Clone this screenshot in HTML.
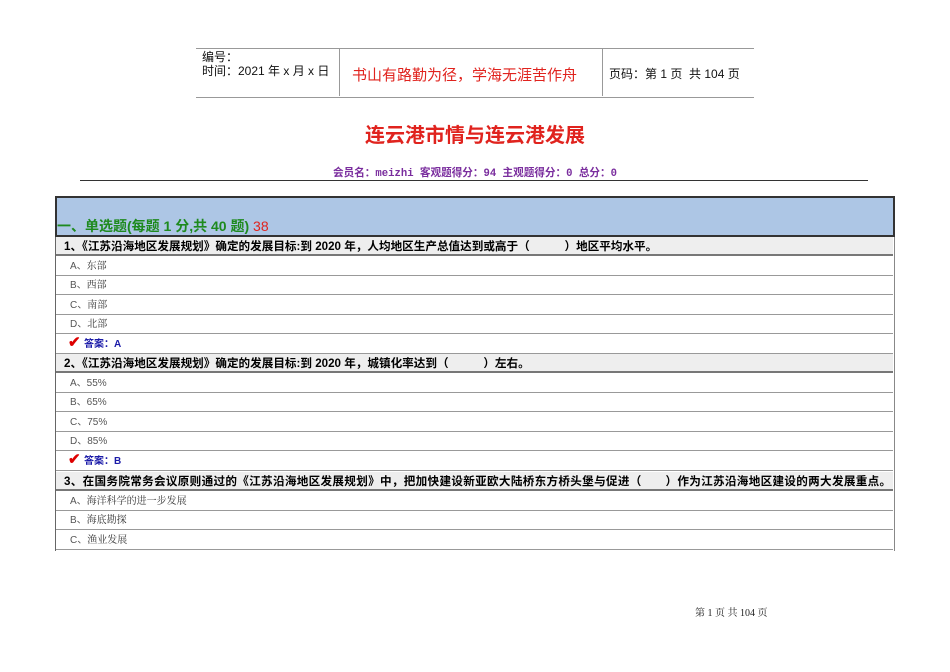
<!DOCTYPE html>
<html><head><meta charset="utf-8"><style>
body{margin:0;width:950px;height:672px;background:#fff;position:relative;font-family:"Liberation Sans","Noto Sans CJK SC",sans-serif;overflow:hidden}
.a{position:absolute;white-space:nowrap}
.row{position:absolute;left:56px;width:837px;height:19px;border-bottom:1.5px solid #999;font-size:10px;line-height:19px;box-sizing:border-box}
.q{background:#eee;font-weight:bold;color:#000;padding-left:8px;border-bottom:2px solid #777;font-size:11.6px}
.o{color:#555;padding-left:14px}
.o span{color:#333;font-family:"Liberation Serif","Noto Serif CJK SC",serif}
.ans{color:#1a1aa8;font-weight:bold;padding-left:28px;font-size:10px}
.ans:before{content:"✔";color:#d00;position:absolute;left:12px;top:-2px;font-size:15px}
</style></head><body>
<div class="a" style="left:196px;top:48px;width:558px;height:48px;border-top:1px solid #999;border-bottom:1px solid #999"></div>
<div class="a" style="left:339px;top:48px;width:262px;height:48px;border-left:1px solid #999;border-right:1px solid #999"></div>
<div class="a" style="left:202px;top:50px;font-size:12px;line-height:14px;color:#111">编号：<br>时间：2021 年 x 月 x 日</div>
<div class="a" style="left:352px;top:64px;font-size:15px;color:#e0231e">书山有路勤为径，学海无涯苦作舟</div>
<div class="a" style="left:609px;top:65px;font-size:12px;color:#111">页码：第 1 页 &nbsp;共 104 页</div>
<div class="a" style="left:0;width:950px;text-align:center;top:119px;font-size:20px;font-weight:bold;color:#e0231e">连云港市情与连云港发展</div>
<div class="a" style="left:0;width:950px;text-align:center;top:165px;font-size:10.6px;font-weight:bold;color:#7a2d9e;font-family:'Liberation Mono','Noto Sans CJK SC',monospace">会员名：meizhi 客观题得分：94 主观题得分：0 总分：0</div>
<div class="a" style="left:80px;top:180px;width:788px;border-top:1px solid #333"></div>
<div class="a" style="left:55px;top:196px;width:840px;height:355px;border-left:1.5px solid #666;border-right:1.5px solid #888;box-sizing:border-box"></div>
<div class="a" style="left:55px;top:196px;width:840px;height:41px;background:#adc6e5;border:2px solid #333;box-sizing:border-box"></div>
<div class="a" style="left:57px;top:216px;font-size:14px;font-weight:bold;color:#1e8a1e">一、单选题(每题 1 分,共 40 题) <span style="color:#e0231e;font-weight:normal">38</span></div>
<div class="row q" style="top:237px">1、《江苏沿海地区发展规划》确定的发展目标:到 2020 年，人均地区生产总值达到或高于（　　　）地区平均水平。</div>
<div class="row o" style="top:257px">A、<span>东部</span></div>
<div class="row o" style="top:276px">B、<span>西部</span></div>
<div class="row o" style="top:296px">C、<span>南部</span></div>
<div class="row o" style="top:315px">D、<span>北部</span></div>
<div class="row ans" style="top:335px">答案：A</div>
<div class="row q" style="top:354px">2、《江苏沿海地区发展规划》确定的发展目标:到 2020 年，城镇化率达到（　　　）左右。</div>
<div class="row o" style="top:374px">A、55%</div>
<div class="row o" style="top:393px">B、65%</div>
<div class="row o" style="top:413px">C、75%</div>
<div class="row o" style="top:432px">D、85%</div>
<div class="row ans" style="top:452px">答案：B</div>
<div class="row q" style="top:472px;letter-spacing:0.3px">3、在国务院常务会议原则通过的《江苏沿海地区发展规划》中，把加快建设新亚欧大陆桥东方桥头堡与促进（　　）作为江苏沿海地区建设的两大发展重点。</div>
<div class="row o" style="top:492px">A、<span>海洋科学的进一步发展</span></div>
<div class="row o" style="top:511px">B、<span>海底勘探</span></div>
<div class="row o" style="top:531px">C、<span>渔业发展</span></div>
<div class="a" style="left:695px;top:604px;font-size:10px;color:#222;font-family:'Liberation Serif','Noto Serif CJK SC',serif">第 1 页 共 104 页</div>
</body></html>
